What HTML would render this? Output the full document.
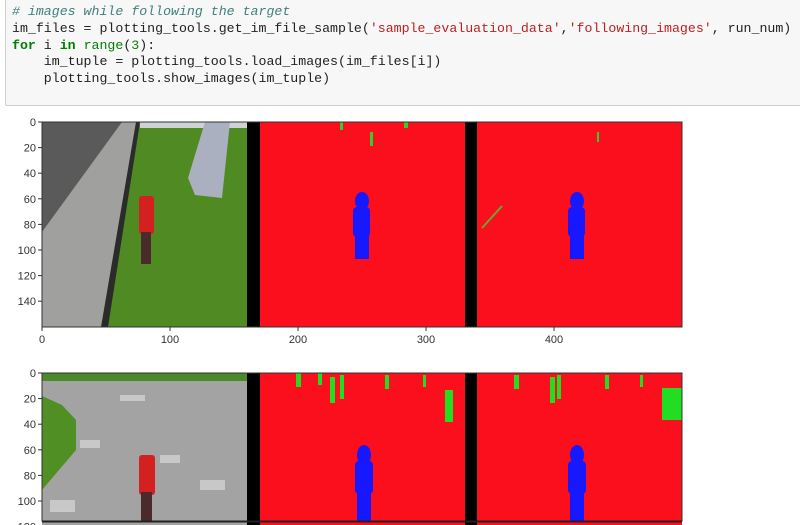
<!DOCTYPE html>
<html><head><style>
body{margin:0;width:800px;height:525px;overflow:hidden;background:#fff;position:relative;font-family:"Liberation Sans",sans-serif}
.cell{position:absolute;left:5px;top:-2px;width:820px;height:106px;background:#f7f7f7;border:1px solid #cfcfcf;border-radius:2px}
pre{position:absolute;left:12px;top:4px;margin:0;font-family:"Liberation Mono",monospace;font-size:13.25px;line-height:16.8px;color:#222}
.c{color:#408080;font-style:italic}.k{color:#008000;font-weight:bold}.s{color:#ba2121}.n{color:#008000}.m{color:#080}
</style></head><body>
<div class="cell"></div>
<pre><span class="c"># images while following the target</span>
im_files = plotting_tools.get_im_file_sample(<span class="s">'sample_evaluation_data'</span>,<span class="s">'following_images'</span>, run_num)
<span class="k">for</span> i <span class="k">in</span> <span class="n">range</span>(<span class="m">3</span>):
    im_tuple = plotting_tools.load_images(im_files[i])
    plotting_tools.show_images(im_tuple)</pre>
<svg width="800" height="525" style="position:absolute;left:0;top:0" font-family="Liberation Sans, sans-serif" font-size="11" fill="#333">
<!-- Row 1 -->
<g>
<rect x="42" y="122" width="205" height="205" fill="#4f8a22"/>
<polygon points="42,122 122,122 42,232" fill="#5a5a5a"/>
<polygon points="122,122 140,122 104,327 42,327 42,232" fill="#a0a09e"/>
<polygon points="136,122 140,122 108,327 101,327" fill="#2b2b2b"/>
<rect x="140" y="122" width="107" height="6" fill="#cfd2d5"/>
<polygon points="205,122 230,122 222,198 195,195 188,178" fill="#aab0c0"/>
<rect x="139" y="196" width="15" height="38" fill="#d52020" rx="3"/>
<rect x="141" y="232" width="10" height="32" fill="#4a2a2a"/>
<rect x="247" y="122" width="13" height="205" fill="#000"/>
<rect x="260" y="122" width="205" height="205" fill="#fb0f1d"/>
<rect x="465" y="122" width="12" height="205" fill="#000"/>
<rect x="477" y="122" width="205" height="205" fill="#fb0f1d"/>
<g fill="#1818ff">
<ellipse cx="362" cy="201" rx="7" ry="9"/><rect x="353" y="207" width="17" height="30" rx="4"/><rect x="355" y="235" width="14" height="24"/>
<ellipse cx="577" cy="201" rx="7" ry="9"/><rect x="568" y="207" width="17" height="30" rx="4"/><rect x="570" y="235" width="14" height="24"/>
</g>
<g fill="#3c3"><rect x="370" y="132" width="3" height="14"/><rect x="340" y="122" width="3" height="8"/><rect x="404" y="122" width="4" height="6"/><rect x="597" y="132" width="2" height="10"/></g>
<line x1="482" y1="228" x2="502" y2="206" stroke="#6a3" stroke-width="2"/>
<rect x="42" y="122" width="640" height="205" fill="none" stroke="#333" stroke-width="1"/>
<g stroke="#333"><line x1="42" y1="327" x2="42" y2="331"/><line x1="170" y1="327" x2="170" y2="331"/><line x1="298" y1="327" x2="298" y2="331"/><line x1="426" y1="327" x2="426" y2="331"/><line x1="554" y1="327" x2="554" y2="331"/>
<line x1="38" y1="122" x2="42" y2="122"/><line x1="38" y1="147.6" x2="42" y2="147.6"/><line x1="38" y1="173.2" x2="42" y2="173.2"/><line x1="38" y1="198.8" x2="42" y2="198.8"/><line x1="38" y1="224.4" x2="42" y2="224.4"/><line x1="38" y1="250" x2="42" y2="250"/><line x1="38" y1="275.6" x2="42" y2="275.6"/><line x1="38" y1="301.2" x2="42" y2="301.2"/></g>
<g text-anchor="end"><text x="36" y="126">0</text><text x="36" y="151.6">20</text><text x="36" y="177.2">40</text><text x="36" y="202.8">60</text><text x="36" y="228.4">80</text><text x="36" y="254">100</text><text x="36" y="279.6">120</text><text x="36" y="305.2">140</text></g>
<g text-anchor="middle"><text x="42" y="343">0</text><text x="170" y="343">100</text><text x="298" y="343">200</text><text x="426" y="343">300</text><text x="554" y="343">400</text></g>
</g>
<!-- Row 2 -->
<g>
<rect x="42" y="373" width="205" height="152" fill="#a3a3a3"/>
<rect x="42" y="373" width="205" height="8" fill="#4a8a2a"/>
<polygon points="42,396 62,405 76,420 76,450 42,490" fill="#4f8f24"/>
<g fill="#d8d8d8" opacity="0.7"><rect x="80" y="440" width="20" height="8"/><rect x="160" y="455" width="20" height="8"/><rect x="200" y="480" width="25" height="10"/><rect x="50" y="500" width="25" height="12"/><rect x="120" y="395" width="25" height="6"/></g>
<rect x="139" y="455" width="16" height="40" fill="#d52020" rx="3"/>
<rect x="141" y="492" width="11" height="30" fill="#4a2a2a"/>
<rect x="247" y="373" width="13" height="152" fill="#000"/>
<rect x="260" y="373" width="205" height="152" fill="#fb0f1d"/>
<rect x="465" y="373" width="12" height="152" fill="#000"/>
<rect x="477" y="373" width="205" height="152" fill="#fb0f1d"/>
<g fill="#2d2"><rect x="296" y="373" width="5" height="14"/><rect x="318" y="373" width="4" height="12"/><rect x="330" y="377" width="5" height="26"/><rect x="340" y="375" width="4" height="24"/><rect x="385" y="375" width="4" height="14"/><rect x="423" y="375" width="3" height="12"/><rect x="445" y="390" width="8" height="32"/>
<rect x="514" y="375" width="5" height="14"/><rect x="550" y="377" width="5" height="26"/><rect x="557" y="375" width="4" height="24"/><rect x="605" y="375" width="4" height="14"/><rect x="640" y="375" width="3" height="12"/><rect x="662" y="388" width="20" height="32"/></g>
<g fill="#1818ff">
<ellipse cx="364" cy="455" rx="7" ry="10"/><rect x="355" y="461" width="18" height="33" rx="4"/><rect x="357" y="492" width="14" height="30"/>
<ellipse cx="577" cy="455" rx="7" ry="10"/><rect x="568" y="461" width="18" height="33" rx="4"/><rect x="570" y="492" width="14" height="30"/>
</g>
<rect x="42" y="373" width="640" height="148" fill="none" stroke="#333"/>
<line x1="42" y1="521.5" x2="682" y2="521.5" stroke="#222" stroke-width="2"/>
<g stroke="#333"><line x1="38" y1="373" x2="42" y2="373"/><line x1="38" y1="398.6" x2="42" y2="398.6"/><line x1="38" y1="424.2" x2="42" y2="424.2"/><line x1="38" y1="449.8" x2="42" y2="449.8"/><line x1="38" y1="475.4" x2="42" y2="475.4"/><line x1="38" y1="501" x2="42" y2="501"/></g>
<g text-anchor="end"><text x="36" y="377">0</text><text x="36" y="402.6">20</text><text x="36" y="428.2">40</text><text x="36" y="453.8">60</text><text x="36" y="479.4">80</text><text x="36" y="505">100</text><text x="36" y="530.6">120</text></g>
</g>
</svg>
</body></html>
